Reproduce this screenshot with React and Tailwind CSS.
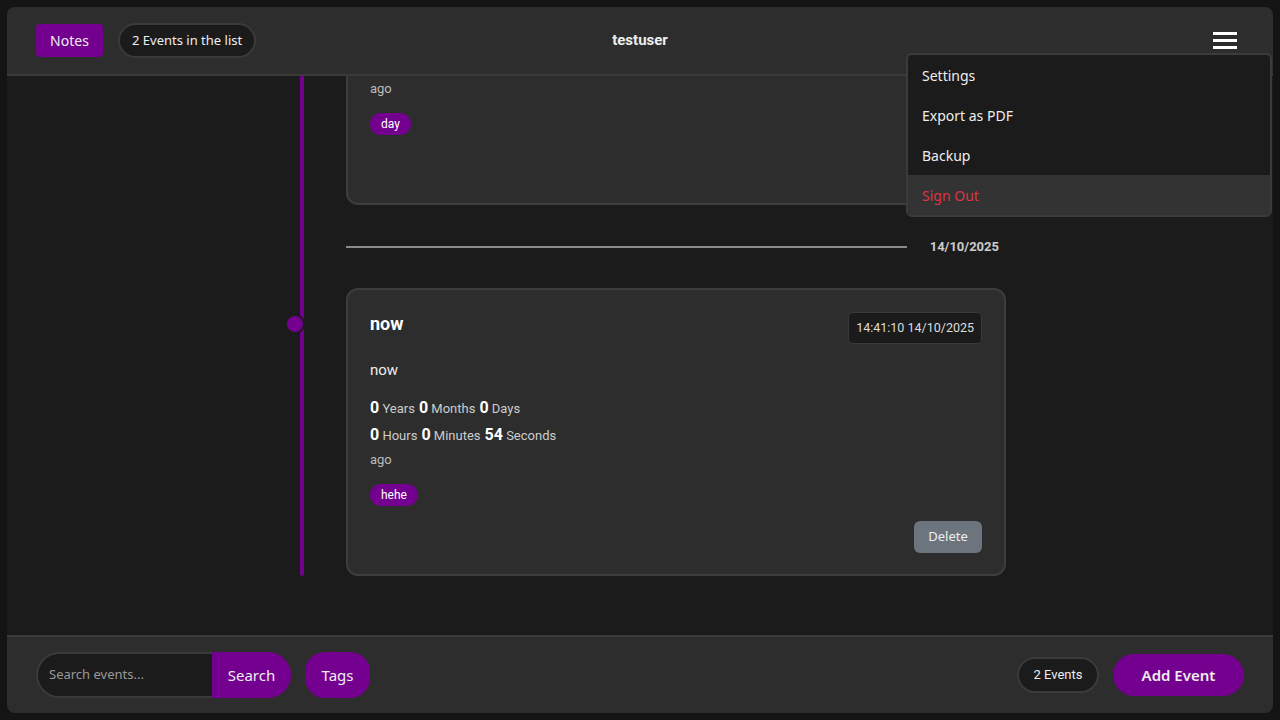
import React from "react";

const PURPLE = "bg-[#74008f]";

function Card({ title, badge, desc, stats, tag, dot, className = "" }) {
  return (
    <div className={"relative rounded-xl border-2 border-[#3d3d3d] bg-[#2d2d2d] px-[22px] pt-[22px] pb-[21px] " + className}>
      {dot && (
        <div className="absolute left-[-63px] top-[24px] h-5 w-5 rounded-full border-2 border-[#1b1b1b] bg-[#74008f]" />
      )}
      <div className="flex items-start justify-between">
        <div className="text-[18px] font-bold leading-6 text-white">{title}</div>
        <div className="flex h-8 items-center rounded border border-[#3a3a3a] bg-[#1b1b1b] px-[7px] text-[12.5px] text-[#ddd]">
          {badge}
        </div>
      </div>
      <div className="mt-4 text-[15px] leading-5 text-[#eee]">{desc}</div>
      <div className="mt-4 flex flex-col gap-[5px]">
        {stats.map((line, i) => (
          <div key={i} className="flex h-[22px] items-baseline text-[13px] text-[#ccc]">
            {line.map(([n, l], j) => (
              <span key={j} className="mr-[4px]">
                <span className="text-[16px] font-bold text-white">{n}</span> {l}
              </span>
            ))}
          </div>
        ))}
      </div>
      <div className="mt-[5px] text-[13px] leading-5 text-[#bbb]">ago</div>
      <div className="mt-[14px] flex">
        <span className={"flex h-[22px] items-center rounded-full px-[11px] text-[12px] text-white " + PURPLE}>{tag}</span>
      </div>
      <div className="mt-[15px] flex justify-end">
        <button className="h-8 w-[68px] rounded-md bg-[#6c757d] font-['Noto_Sans'] text-[13px] text-[#eee]">Delete</button>
      </div>
    </div>
  );
}

export default function App() {
  const stats = [
    [["0", "Years"], ["0", "Months"], ["0", "Days"]],
    [["0", "Hours"], ["0", "Minutes"], ["54", "Seconds"]],
  ];
  return (
    <div className="h-screen w-full bg-[#141414] p-[7px] font-['Roboto',sans-serif]">
      <div className="relative flex h-full flex-col overflow-hidden rounded-lg bg-[#1b1b1b]">
        {/* header */}
        <header className="z-10 flex h-[69px] shrink-0 items-center border-b-2 border-[#3a3a3a] bg-[#2d2d2d] px-[29px]">
          <div className="flex flex-1 items-center gap-[15px]">
            <button className={"h-[33px] w-[67px] rounded font-['Noto_Sans'] text-[14px] text-[#eee] " + PURPLE}>Notes</button>
            <div className="flex h-[35px] items-center rounded-full border-2 border-[#3a3a3a] bg-[#1b1b1b] px-[12px] font-['Noto_Sans'] text-[13px] text-[#eee]">
              2 Events in the list
            </div>
          </div>
          <div className="text-[15px] font-bold text-[#eee]">testuser</div>
          <div className="flex flex-1 justify-end">
            <div className="mr-[7px] flex w-6 flex-col gap-[4px]">
              <div className="h-[3px] bg-white" />
              <div className="h-[3px] bg-white" />
              <div className="h-[3px] bg-white" />
            </div>
          </div>
        </header>

        {/* main */}
        <main className="relative flex-1 overflow-hidden">
          <div className="relative ml-[339px] mt-[-159px] w-[660px]">
            <div className="absolute bottom-0 left-[-46px] top-0 w-1 rounded-full bg-[#74008f]" />
            <Card title="day" badge="14:41:10 13/10/2025" desc="day" stats={stats} tag="day" dot />
            <div className="flex h-[83px] items-center">
              <div className="h-[2px] flex-1 bg-[#8a8a8a]" />
              <div className="pl-[23px] pr-[7px] text-[13px] font-bold text-[#ccc]">14/10/2025</div>
            </div>
            <Card title="now" badge="14:41:10 14/10/2025" desc="now" stats={stats} tag="hehe" dot />
          </div>
        </main>

        {/* footer */}
        <footer className="flex h-[78px] shrink-0 items-center border-t-2 border-[#3a3a3a] bg-[#2d2d2d] pl-[29px] pr-[29px]">
          <div className="flex flex-1 items-center">
            <div className="flex h-[46px] w-[176px] items-center rounded-l-full border-2 border-r-0 border-[#3a3a3a] bg-[#1b1b1b] pl-[11px] font-['Noto_Sans'] text-[13px] text-[#999]">
              Search events...
            </div>
            <button className={"h-[46px] w-[79px] rounded-r-full font-['Noto_Sans'] text-[15px] text-[#eee] " + PURPLE}>Search</button>
            <button className={"ml-[14px] h-[46px] w-[65px] rounded-[20px] font-['Noto_Sans'] text-[15px] text-[#eee] " + PURPLE}>Tags</button>
          </div>
          <div className="flex items-center gap-[14px]">
            <div className="flex h-9 w-[82px] items-center justify-center rounded-full border-2 border-[#3a3a3a] bg-[#1b1b1b] text-[13px] text-[#eee]">
              2 Events
            </div>
            <button className={"h-[42px] w-[131px] rounded-full font-['Noto_Sans'] text-[15px] font-semibold text-[#eee] " + PURPLE}>Add Event</button>
          </div>
        </footer>

        {/* dropdown */}
        <div className="absolute left-[899px] top-[46px] z-20 w-[366px] overflow-hidden rounded-md border-2 border-[#3b3b3b] bg-[#1b1b1b] font-['Noto_Sans'] text-[14px]">
          <div className="flex h-10 items-center pl-[14px] text-[#eee]">Settings</div>
          <div className="flex h-10 items-center pl-[14px] text-[#eee]">Export as PDF</div>
          <div className="flex h-10 items-center pl-[14px] text-[#eee]">Backup</div>
          <div className="flex h-10 items-center bg-[#333333] pl-[14px] text-[#dc3545]">Sign Out</div>
        </div>
      </div>
    </div>
  );
}
